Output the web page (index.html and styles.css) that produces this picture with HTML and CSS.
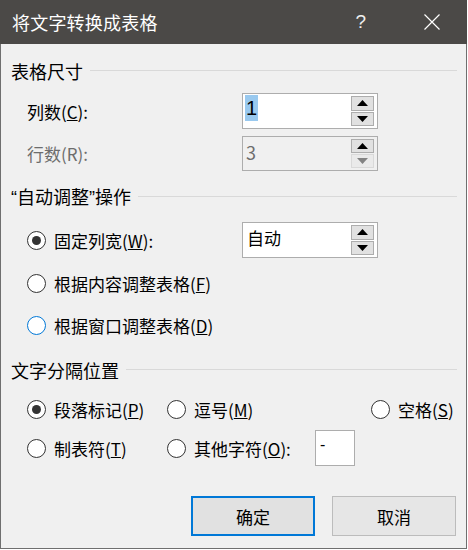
FILE: index.html
```html
<!DOCTYPE html>
<html lang="zh">
<head>
<meta charset="utf-8">
<link rel="stylesheet" href="styles.css">
</head>
<body>
<div class="dialog">
  <div class="titlebar">
    <span class="title">将文字转换成表格</span>
    <span class="help">?</span>
    <svg class="close" width="16" height="16" viewBox="0 0 16 16"><path d="M0.5 0.5 L15.5 15.5 M15.5 0.5 L0.5 15.5" stroke="#fff" stroke-width="1.2" fill="none"/></svg>
  </div>
  <div class="content">
    <div class="group-head h1"><span>表格尺寸</span><i class="rule"></i></div>
    <div class="spin-row r1">
      <span class="label">列数(<u>C</u>):</span>
      <div class="spin">
        <span class="value"><span class="sel">1</span></span>
        <div class="arrows">
          <span class="btn"><svg width="11" height="6" viewBox="0 0 11 6"><path d="M5.5 0 L11 6 L0 6Z" fill="#000"/></svg></span>
          <span class="btn"><svg width="11" height="6" viewBox="0 0 11 6"><path d="M0 0 L11 0 L5.5 6Z" fill="#000"/></svg></span>
        </div>
      </div>
    </div>
    <div class="spin-row r2 disabled">
      <span class="label">行数(R):</span>
      <div class="spin off">
        <span class="value">3</span>
        <div class="arrows">
          <span class="btn"><svg width="11" height="6" viewBox="0 0 11 6"><path d="M5.5 0 L11 6 L0 6Z" fill="#000"/></svg></span>
          <span class="btn dim"><svg width="11" height="6" viewBox="0 0 11 6"><path d="M0 0 L11 0 L5.5 6Z" fill="#838383"/></svg></span>
        </div>
      </div>
    </div>

    <div class="group-head h2"><span><b class="q">“</b>自动调整<b class="q">”</b>操作</span><i class="rule"></i></div>
    <div class="spin-row r3">
      <span class="radio-label"><i class="radio checked"></i>固定列宽(<u>W</u>):</span>
      <div class="spin">
        <span class="value">自动</span>
        <div class="arrows">
          <span class="btn"><svg width="11" height="6" viewBox="0 0 11 6"><path d="M5.5 0 L11 6 L0 6Z" fill="#000"/></svg></span>
          <span class="btn"><svg width="11" height="6" viewBox="0 0 11 6"><path d="M0 0 L11 0 L5.5 6Z" fill="#000"/></svg></span>
        </div>
      </div>
    </div>
    <div class="radio-row r4"><span class="radio-label"><i class="radio"></i>根据内容调整表格(<u>F</u>)</span></div>
    <div class="radio-row r5"><span class="radio-label"><i class="radio focus"></i>根据窗口调整表格(<u>D</u>)</span></div>

    <div class="group-head h3"><span>文字分隔位置</span><i class="rule"></i></div>
    <div class="sep-grid">
      <span class="radio-label"><i class="radio checked"></i>段落标记(<u>P</u>)</span>
      <span class="radio-label"><i class="radio"></i>逗号(<u>M</u>)</span>
      <span class="radio-label"><i class="radio"></i>空格(<u>S</u>)</span>
      <span class="radio-label row2"><i class="radio"></i>制表符(<u>T</u>)</span>
      <span class="radio-label row2 other"><span class="other-text"><i class="radio"></i>其他字符(<u>O</u>):</span><span class="char-box">-</span></span>
    </div>

    <div class="buttons">
      <button class="btn-ok">确定</button>
      <button class="btn-cancel">取消</button>
    </div>
  </div>
</div>
</body>
</html>
```

FILE: styles.css
```css
html, body {
  margin: 0;
  padding: 0;
  background: #ffffff;
}
body {
  font-family: "Noto Sans CJK SC", "Noto Sans", sans-serif;
  font-size: 17px;
  color: #000;
}
.dialog {
  width: 467px;
  height: 549px;
  box-sizing: border-box;
  border: 1px solid #6f6f6f;
  border-top: none;
  background: #f0f0f0;
  display: flex;
  flex-direction: column;
}
.titlebar {
  height: 44px;
  background: #4b4947;
  color: #fff;
  display: flex;
  align-items: center;
  margin: 0 -1px;
  padding-left: 12px;
}
.title {
  font-size: 18px;
  letter-spacing: 0.2px;
  flex: 1;
  line-height: 1;
}
.help {
  font-family: "Liberation Sans", sans-serif;
  font-size: 19px;
  margin-right: 58px;
  color: #f0f0f0;
}
.close {
  margin-right: 27px;
}
.content {
  display: flex;
  flex-direction: column;
  padding: 0 9px 0 10px;
}
.group-head {
  height: 24px;
  display: flex;
  align-items: center;
  font-size: 18px;
  line-height: 24px;
}
.group-head span {
  padding-right: 7px;
}
.q {
  font-family: "Liberation Sans", sans-serif;
  font-weight: normal;
}
.rule {
  flex: 1;
  height: 1px;
  background: #d9d9d9;
  margin-top: -2px;
}
.h1 { margin-top: 15px; }
.h2 { margin-top: 14px; }
.h3 { margin-top: 15px; }

.spin-row {
  height: 36px;
  display: grid;
  grid-template-columns: 215px 136px;
  align-items: center;
  padding-left: 16px;
}
.r1 { margin-top: 10px; }
.r2 { margin-top: 6px; }
.r3 { margin-top: 13px; }
.label {
  font-size: 17px;
}
.disabled .label {
  color: #6d6d6d;
}
.spin {
  height: 36px;
  box-sizing: border-box;
  border: 1px solid #adadad;
  background: #fff;
  display: flex;
  align-items: stretch;
}
.spin.off {
  background: #f0f0f0;
  height: 35px;
}
.value {
  flex: 1;
  padding-left: 2px;
  display: flex;
  align-items: flex-start;
  padding-top: 3px;
  font-size: 18px;
  line-height: 22px;
}
.off .value {
  color: #6d6d6d;
  padding-left: 3px;
  padding-top: 4px;
}
.sel {
  background: #99c9ef;
  padding: 0 1px;
  font-family: "Liberation Sans", sans-serif;
  font-size: 20px;
  line-height: 26px;
}
.r1 .value { padding-top: 1px; }
.r3 .value { padding-left: 4px; padding-top: 4px; font-size: 17px; }
.arrows {
  width: 23px;
  display: flex;
  flex-direction: column;
  padding: 2px 3px 2px 0;
  gap: 1px;
}
.btn {
  flex: 1;
  box-sizing: border-box;
  border: 1px solid #adadad;
  background: #e1e1e1;
  display: flex;
  align-items: center;
  justify-content: center;
}
.btn.dim {
  border-color: #d9d9d9;
  background: #eaeaea;
}

.radio-row {
  height: 36px;
  display: flex;
  align-items: center;
  padding-left: 16px;
}
.r4 { margin-top: 7px; }
.r5 { margin-top: 6px; }
.radio-label {
  display: flex;
  align-items: center;
  font-size: 17px;
  white-space: nowrap;
}
.radio {
  width: 19px;
  height: 19px;
  box-sizing: border-box;
  border: 1px solid #333;
  border-radius: 50%;
  background: #fff;
  margin-right: 8px;
  display: flex;
  align-items: center;
  justify-content: center;
  flex: none;
}
.radio.checked::after {
  content: "";
  width: 9px;
  height: 9px;
  border-radius: 50%;
  background: #333;
}
.radio.focus {
  border-color: #0078d7;
}
.sep-grid {
  margin-top: 9px;
  padding-left: 16px;
  display: grid;
  grid-template-columns: 140px 204px auto;
  grid-template-rows: 36px 36px;
  row-gap: 3px;
  align-items: center;
}
.other {
  grid-column: 2 / 4;
}
.other-text {
  display: flex;
  align-items: center;
  width: 148px;
}
.char-box {
  width: 40px;
  height: 36px;
  box-sizing: border-box;
  border: 1px solid #adadad;
  background: #fff;
  font-family: "Liberation Sans", sans-serif;
  font-size: 16px;
  padding-left: 4px;
  line-height: 28px;
}
.buttons {
  margin-top: 30px;
  display: flex;
  justify-content: flex-end;
  gap: 17px;
  padding-right: 1px;
}
.buttons button {
  width: 124px;
  height: 40px;
  box-sizing: border-box;
  font-family: "Noto Sans CJK SC", sans-serif;
  font-size: 17px;
  color: #000;
  background: #e1e1e1;
  padding: 0;
}
.btn-ok {
  border: 2px solid #0078d7;
}
.btn-cancel {
  border: 1px solid #bcbcbc;
  background: #e6e6e6 !important;
}
```
